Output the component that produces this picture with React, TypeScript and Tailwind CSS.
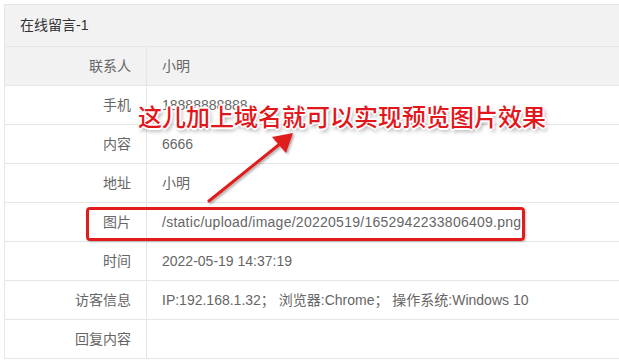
import React from "react";

const rows: { label: string; value: string; gray?: boolean; track?: boolean }[] = [
  { label: "联系人", value: "小明", gray: true },
  { label: "手机", value: "18888888888" },
  { label: "内容", value: "6666" },
  { label: "地址", value: "小明" },
  { label: "图片", value: "/static/upload/image/20220519/1652942233806409.png", track: true },
  { label: "时间", value: "2022-05-19 14:37:19" },
  { label: "访客信息", value: "IP:192.168.1.32； 浏览器:Chrome； 操作系统:Windows 10" },
  { label: "回复内容", value: "" },
];

export default function App() {
  return (
    <div
      className="relative w-[619px] h-[362px] overflow-hidden bg-white pl-[4px] pt-[4px]"
      style={{ fontFamily: '"Liberation Sans", "Noto Sans CJK SC", sans-serif' }}
    >
      <div className="w-[660px] border-l border-t border-[#e6e6e6]">
        <div className="h-[42px] bg-[#f2f2f2] border-b border-[#e6e6e6] flex items-center px-[15px] text-[14px] text-[#333]">
          在线留言-1
        </div>
        {rows.map((r) => (
          <div
            key={r.label}
            className={`flex h-[39px] border-b border-[#e6e6e6] text-[14px] text-[#666] ${r.gray ? "bg-[#f2f2f2]" : "bg-white"}`}
          >
            <div className="w-[142px] shrink-0 border-r border-[#e6e6e6] flex items-center justify-end pr-[15px]">
              {r.label}
            </div>
            <div
              className={`flex-1 flex items-center pl-[15px] whitespace-pre ${r.track ? "tracking-[0.26px]" : ""}`}
            >
              {r.value}
            </div>
          </div>
        ))}
      </div>

      {/* red highlight box */}
      <div className="absolute left-[86px] top-[207px] w-[439px] h-[34px] border-[3px] border-[#e01c1c] rounded-[4px] shadow-[1px_1px_2px_rgba(0,0,0,0.25)]" />

      {/* arrow */}
      <svg className="absolute left-0 top-0" width="619" height="362" viewBox="0 0 619 362">
        <defs>
          <filter id="sh" x="-20%" y="-20%" width="140%" height="140%">
            <feDropShadow dx="1.5" dy="1.5" stdDeviation="1.2" floodColor="#000" floodOpacity="0.35" />
          </filter>
        </defs>
        <g filter="url(#sh)">
          <line x1="209" y1="201" x2="281" y2="143" stroke="#e01c1c" strokeWidth="3" strokeLinecap="round" />
          <polygon points="293,133 286,153 272,137" fill="#e01c1c" />
        </g>
      </svg>

      {/* annotation text */}
      <div
        className="absolute left-[138px] top-[104px] text-[24px] leading-[24px] text-[#e3161c] font-medium whitespace-nowrap [text-shadow:-1px_-1px_0_#fff,1px_-1px_0_#fff,-1px_1px_0_#fff,1px_1px_0_#fff,0_-2px_0_#fff,0_2px_0_#fff,-2px_0_0_#fff,2px_0_0_#fff,2px_3px_4px_rgba(0,0,0,0.45)]"
        style={{ fontFamily: '"Noto Sans CJK SC", sans-serif' }}
      >
        这儿加上域名就可以实现预览图片效果
      </div>
    </div>
  );
}
